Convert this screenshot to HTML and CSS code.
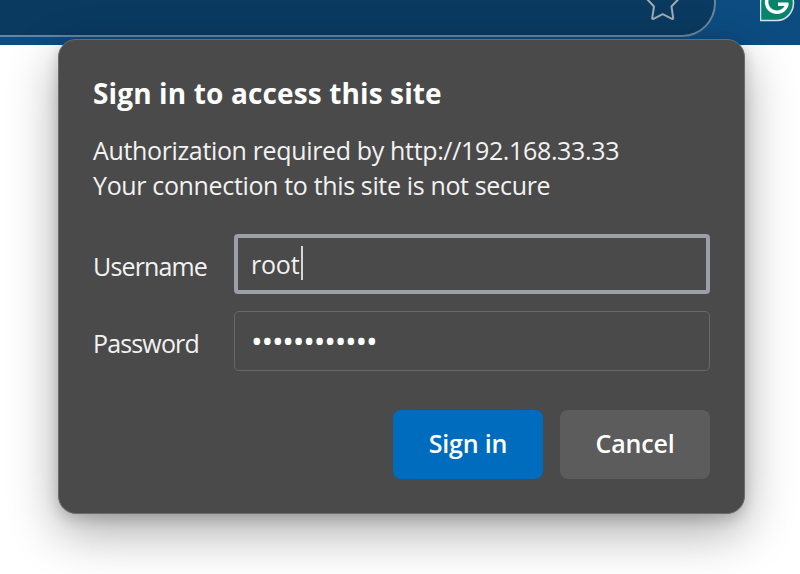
FILE: index.html
```html
<!DOCTYPE html>
<html lang="en">
<head>
    <meta charset="UTF-8">
    <meta name="viewport" content="width=device-width, initial-scale=1.0">
    <title>Sign in</title>
    <link rel="stylesheet" href="styles.css">
</head>
<body>
    <div class="toolbar">
        <div class="address-bar">
            <svg class="star" width="36" height="37" viewBox="0 0 36 37">
                <path d="M17.7 -13 L22.5 -2 L34 -0.5 L26.5 7.5 L28.2 19.2 Q28 20.3 27 19.8 L17.7 15.2 L8.5 19.8 Q7.4 20.3 7.2 19.2 L9 7.5 L1.5 -0.5 L13 -2 Z"/>
            </svg>
        </div>
        <svg class="grammarly" width="40" height="45" viewBox="0 0 40 45">
            <path class="badge" d="M0.5 20.5 V3 A16.5 16.5 0 0 1 33.5 3 A16.5 17.5 0 0 1 17 20.5 Z"/>
            <path class="letter" d="M24.5 -5 A10.3 10.3 0 1 0 27 4.2 M18 4.2 H28.5"/>
        </svg>
    </div>
    <form class="dialog" onsubmit="return false">
        <h1 class="title">Sign in to access this site</h1>
        <p class="message">
            <span class="origin">Authorization required by http://192.168.33.33</span><br>
            <span class="warning">Your connection to this site is not secure</span>
        </p>
        <div class="fields">
            <label for="username">Username</label>
            <div class="field focused" id="username"><span class="value">root</span><span class="caret"></span></div>
            <label for="password">Password</label>
            <div class="field" id="password"><span class="dots">••••••••••••</span></div>
        </div>
        <div class="buttons">
            <button class="primary">Sign in</button>
            <button class="secondary">Cancel</button>
        </div>
    </form>
</body>
</html>
```
FILE: styles.css
```css
* {
    box-sizing: border-box;
}
body {
    margin: 0;
    height: 574px;
    overflow: hidden;
    background-color: #fff;
    font-family: "Open Sans", "Noto Sans", sans-serif;
    font-size: 25px;
    color: #f2f2f2;
}
.toolbar {
    display: flex;
    height: 45px;
    background-color: #0d4c80;
    overflow: hidden;
}
.address-bar {
    display: flex;
    justify-content: flex-end;
    width: 716px;
    height: 68px;
    margin-top: -31px;
    padding: 31px 34px 0 0;
    background-color: #0a3a60;
    border: 2px solid #6685a0;
    border-left: 0;
    border-radius: 0 34px 34px 0;
}
.star {
    margin: -3px -1px 0 0;
    fill: none;
    stroke: #a3a9b0;
    stroke-width: 2;
    stroke-linejoin: round;
}
.grammarly {
    margin-left: 44px;
}
.badge {
    fill: #08836c;
    stroke: #d4e2e6;
    stroke-width: 1.5;
}
.letter {
    fill: none;
    stroke: #fff;
    stroke-width: 3.5;
}
.dialog {
    position: relative;
    width: 687px;
    height: 475px;
    margin: -6px 0 0 58px;
    padding: 33px 34px 0;
    background-color: #4a4a4a;
    border: 1px solid #6b6b6b;
    border-radius: 18px;
    box-shadow: 0 18px 50px rgba(0, 0, 0, 0.33), 0 5px 14px rgba(0, 0, 0, 0.17);
}
.title {
    margin: 0;
    font-size: 28px;
    letter-spacing: 0.13px;
    line-height: 40px;
    font-weight: 700;
    color: #fff;
    white-space: nowrap;
}
.message {
    margin: 20px 0 0;
    line-height: 34.5px;
    letter-spacing: -0.35px;
    white-space: nowrap;
}
.fields {
    display: grid;
    grid-template-columns: 141px 476px;
    row-gap: 17px;
    align-items: center;
    margin-top: 32px;
}
.fields label {
    padding-top: 3px;
    letter-spacing: -0.85px;
}
.field {
    display: flex;
    align-items: center;
    height: 60px;
    padding: 0 0 0 16px;
    border: 1px solid #686868;
    border-radius: 5px;
}
.field.focused {
    padding-left: 13px;
    border: 4px solid #9aa0a8;
    border-radius: 4px;
}
.value {
    margin-top: -1px;
    letter-spacing: -0.2px;
}
.caret {
    width: 2px;
    height: 34px;
    margin: -3px 0 0 2px;
    background-color: #d6d6d6;
}
.dots {
    font-size: 31px;
    letter-spacing: -1.2px;
    color: #fff;
}
.buttons {
    display: flex;
    justify-content: flex-end;
    gap: 17px;
    margin-top: 39px;
}
.buttons button {
    width: 150px;
    height: 69px;
    padding: 0 0 3px;
    border: 0;
    border-radius: 8px;
    font: inherit;
    font-weight: 600;
    letter-spacing: -0.2px;
    color: #fff;
}
.primary {
    background-color: #006cbe;
}
.buttons .secondary {
    background-color: #5c5c5c;
}
```
